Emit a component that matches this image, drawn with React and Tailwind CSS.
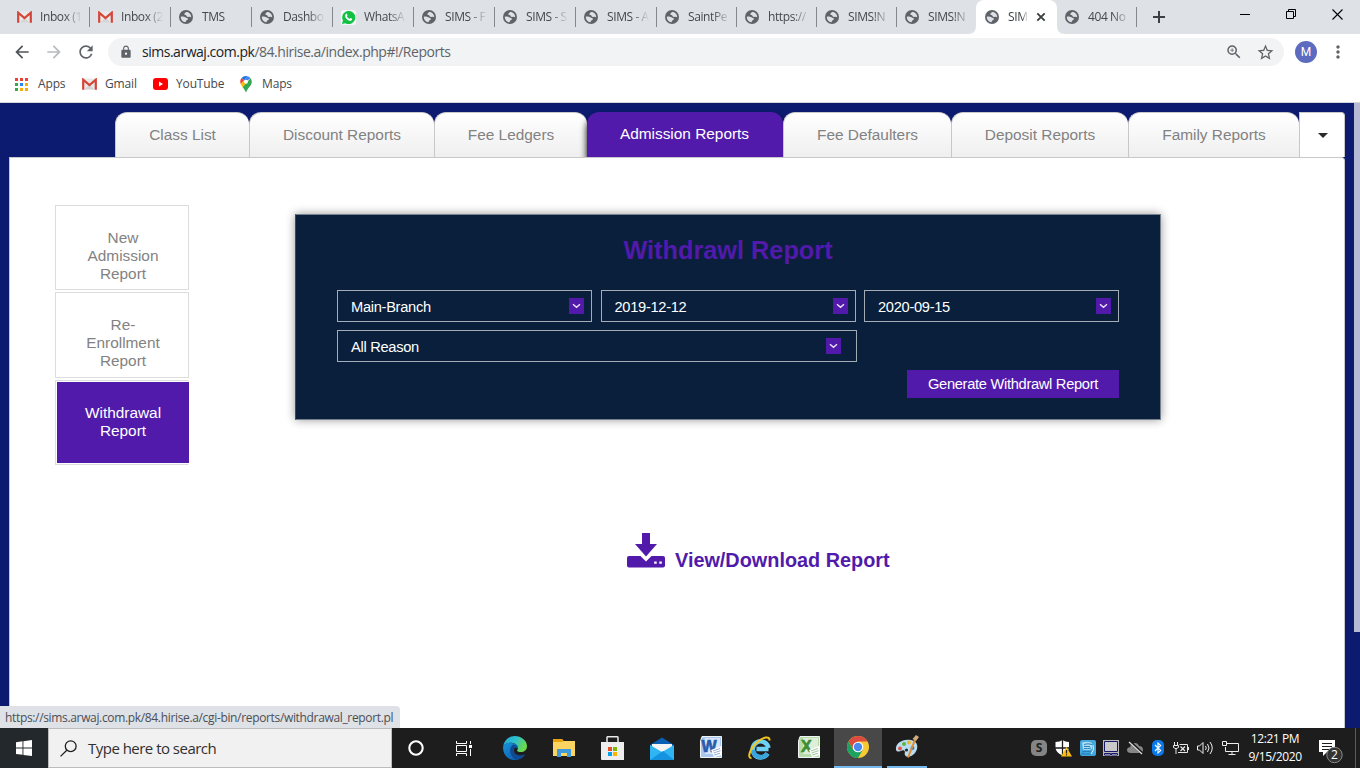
import React from "react";
import { MdLock, MdOutlineZoomIn, MdStarBorder, MdMoreVert, MdArrowBack, MdArrowForward, MdRefresh } from "react-icons/md";

const Globe = () => (
  <svg width="14" height="14" viewBox="0 0 14 14" className="shrink-0">
    <circle cx="7" cy="7" r="7" fill="#5f6368" />
    <path d="M7.200 1.900C6.600 2.800 5.200 3.200 5.300 4.300C5.500 5.400 7.200 4.900 7.600 5.900C7.900 6.800 9.200 7.200 10.200 6.800C11 6.500 11.600 7 12.200 7.400C12.400 4.500 10.300 1.900 7.200 1.900Z" fill="#dee1e6" />
    <path d="M1.800 6.800C2.900 6.300 5 6.200 6.300 7.200C7.200 8 8.900 7.700 8.900 9C8.800 10.100 7.200 10 7 11L6.500 12.300C3.800 12.100 1.700 9.700 1.800 6.800Z" fill="#dee1e6" />
  </svg>
);

const Gmail = () => (
  <svg width="15" height="12" viewBox="0 0 15 12" className="shrink-0">
    <rect x="1" y="0.5" width="13" height="11" rx="1" fill="#e9e9e9" />
    <path d="M2.5 11.5 7.5 6.5 12.5 11.5Z" fill="#d5d5d5" />
    <path d="M1.200 11.700V1.700L7.500 7l6.300-5.300v10" fill="none" stroke="#d54538" strokeWidth="2.200" />
  </svg>
);

const WhatsApp = () => (
  <svg width="15" height="15" viewBox="0 0 16 16" className="shrink-0">
    <rect width="16" height="16" rx="3" fill="#f4f6f5" />
    <path d="M1 15 2.100 11.300A7 7 0 1 1 4.700 14Z" fill="#12c143" />
    <path d="M5.100 4.200c.6-.6 1-.4 1.300.2l.5 1.200c.1.5-.6.9-.5 1.200.6 1.200 1.500 2 2.700 2.500.4.1.8-.9 1.200-.8l1.500.8c.4.3-.1 1.400-.7 1.800-1.600 1-4-.5-5.300-1.900C4.600 8 3.800 5.700 5.100 4.200Z" fill="#fff" />
  </svg>
);

const browserTabs = [
  ["gmail", "Inbox (1"], ["gmail", "Inbox (2"], ["globe", "TMS"], ["globe", "Dashbo"], ["wa", "WhatsA"],
  ["globe", "SIMS - F"], ["globe", "SIMS - S"], ["globe", "SIMS - A"],
];
const browserTabsNarrow = [["globe", "SaintPe"], ["globe", "https://"], ["globe", "SIMS!N"], ["globe", "SIMS!N", true]];

function Favicon({ kind }) {
  if (kind === "gmail") return <Gmail />;
  if (kind === "wa") return <WhatsApp />;
  return <Globe />;
}

function BrowserTab({ kind, label, narrow, last }) {
  return (
    <div className={`${narrow ? "w-20" : "w-[81px]"} flex h-[34px] shrink-0 items-center pl-2`}>
      <span className="flex w-[23px] shrink-0"><Favicon kind={kind} /></span>
      <span className="w-[45px] overflow-hidden whitespace-nowrap text-xs tracking-[-0.4px] text-[#45484c] [mask-image:linear-gradient(to_right,black_55%,transparent_94%)]">{label}</span>
      {!last && <span className="ml-auto h-5 w-px bg-[#84878c]" />}
    </div>
  );
}

function TabStrip() {
  return (
    <div className="flex h-[34px] bg-[#dee1e6] pl-[9px]">
      {browserTabs.map(([k, l], i) => <BrowserTab key={i} kind={k} label={l} />)}
      {browserTabsNarrow.map(([k, l, last], i) => <BrowserTab key={i} kind={k} label={l} narrow last={last} />)}
      <div className="relative -ml-px flex h-[34px] w-[81px] shrink-0 items-center rounded-t-lg bg-white pl-[9px]">
        <svg width="97" height="8" viewBox="0 0 97 8" className="absolute bottom-0 -left-2">
          <path d="M0 8Q8 8 8 0V8ZM97 8Q89 8 89 0V8Z" fill="#fff" />
        </svg>
        <span className="flex w-[23px]"><Globe /></span>
        <span className="w-5 overflow-hidden whitespace-nowrap text-xs tracking-[-0.4px] text-[#3c4043] [mask-image:linear-gradient(to_right,black_70%,transparent)]">SIM</span>
        <svg width="10" height="10" viewBox="0 0 10 10" className="ml-2"><path d="M1.300 1.300 8.700 8.700M8.700 1.300 1.300 8.700" stroke="#3c4043" strokeWidth="1.900" /></svg>
      </div>
      <BrowserTab kind="globe" label="404 No" narrow />
      <svg width="12" height="12" viewBox="0 0 12 12" className="mt-[11px] ml-4"><path d="M6 0V12M0 6H12" stroke="#3c4043" strokeWidth="2" /></svg>
      <div className="mr-[17px] ml-auto flex gap-9 pt-[9px] text-black">
        <svg width="10" height="11" viewBox="0 0 10 11"><path d="M0 5.500H10" stroke="#000" /></svg>
        <svg width="10" height="10" viewBox="0 0 10 10" fill="none" stroke="#000"><path d="M.5 2.500H7.500V9.500H.5ZM2.500 2.500V.5H9.500V7.500H7.500" /></svg>
        <svg width="11" height="11" viewBox="0 0 11 11"><path d="M.5.5 10.500 10.500M10.500.5.5 10.500" stroke="#000" strokeWidth="1.100" /></svg>
      </div>
    </div>
  );
}

function Toolbar() {
  return (
    <div className="flex h-9 items-center bg-white pr-4 pl-3 text-[#5f6368]">
      <MdArrowBack size={20} className="shrink-0 text-[#4f5357]" />
      <MdArrowForward size={20} className="ml-3 shrink-0 text-[#b9bbbe]" />
      <MdRefresh size={20} className="ml-3 shrink-0" />
      <div className="ml-3 flex h-7 w-[1176px] shrink-0 items-center rounded-full bg-[#f1f3f4] pr-[9px] pl-[11px]">
        <MdLock size={14} className="mb-px shrink-0" />
        <span className="ml-[9px] text-sm whitespace-nowrap tracking-[-0.48px] text-[#5f6368]"><span className="text-[#202124]">sims.arwaj.com.pk</span>/84.hirise.a/index.php#!/Reports</span>
        <MdOutlineZoomIn size={18} className="ml-auto" />
        <MdStarBorder size={19} className="ml-[13px]" />
      </div>
      <span className="ml-[11px] flex size-[22px] shrink-0 items-center justify-center rounded-full bg-[#5c6bc0] font-['Roboto',sans-serif] text-xs text-white">M</span>
      <MdMoreVert size={20} className="-mr-1 ml-auto shrink-0" />
    </div>
  );
}

function Bookmarks() {
  return (
    <div className="flex h-8 items-center bg-white pb-1 pl-[15px] text-xs tracking-[-0.15px] text-[#45484c]">
      <svg width="13" height="13" viewBox="0 0 13 13">
        <path d="M0 0h3v3H0zM5 0h3v3H5zM10 0h3v3h-3z" fill="#ea4335" />
        <path d="M0 5h3v3H0z" fill="#34a853" /><path d="M5 5h3v3H5z" fill="#2b86f5" /><path d="M10 5h3v3h-3z" fill="#fbab05" />
        <path d="M0 10h3v3H0z" fill="#34a853" /><path d="M5 10h3v3H5zM10 10h3v3h-3z" fill="#fbab05" />
      </svg>
      <span className="ml-[10px] w-[44px]">Apps</span>
      <Gmail />
      <span className="ml-2 w-[48px]">Gmail</span>
      <svg width="15" height="12" viewBox="0 0 15 12"><rect width="15" height="12" rx="3" fill="#f00" /><path d="M6 3.500 10 6 6 8.500Z" fill="#fff" /></svg>
      <span className="ml-2 w-[64px]">YouTube</span>
      <svg width="12" height="16" viewBox="0 0 12 16">
        <path d="M6 0a5.700 5.700 0 0 0-4.400 2L4.200 4.300 7.800.3Z" fill="#1a73e8" />
        <path d="M7.800.3 4.200 4.300 6 5.500 10.500 2.200A6 6 0 0 0 7.800.3Z" fill="#4285f4" />
        <path d="M1.600 2C.3 3.500-.2 5.700.7 7.900L4.200 4.300Z" fill="#ea4335" />
        <path d="M.7 7.900 4 4.500 6 8 2.600 11.200Z" fill="#fbbc04" />
        <path d="M2.600 11.200 10.500 2.200C12.300 4.400 12.200 7.200 10.600 9.400 8.800 11.600 7.200 13.200 6.500 15.700H5.500C5 14 3.800 12.700 2.600 11.200Z" fill="#34a853" />
        <circle cx="6" cy="5.800" r="2" fill="#fff" />
      </svg>
      <span className="ml-[10px]">Maps</span>
    </div>
  );
}

const reportTabsLeft = [["Class List", "w-[134px]"], ["Discount Reports", "w-[185px]"], ["Fee Ledgers", "w-[153px]"]];
const reportTabsRight = [["Fee Defaulters", "w-[168px]"], ["Deposit Reports", "w-[177px]"], ["Family Reports", "w-[171px]"]];

const ReportTab = ({ label, width }) => (
  <div className={`${width} relative flex h-[45px] shrink-0 items-center justify-center rounded-t-xl border-t border-l border-[#c8c8c8] bg-linear-to-b from-white to-[#efefef] text-[#828282]`}>{label}</div>
);

function ReportTabs() {
  return (
    <div className="ml-[115px] flex h-[54px] w-[1230px] overflow-hidden pt-[9px] font-['Liberation_Sans',Arial,sans-serif] text-[15.4px]">
      {reportTabsLeft.map(([l, w]) => <ReportTab key={l} label={l} width={w} />)}
      <div className="relative flex h-[45px] w-[196px] shrink-0 items-center justify-center rounded-t-xl bg-[#511aab] pr-px pb-px text-white shadow-[0_5px_7px_#000]">Admission Reports</div>
      {reportTabsRight.map(([l, w]) => <ReportTab key={l} label={l} width={w} />)}
      <div className="flex h-[45px] w-[46px] items-center justify-center rounded-tr border border-b-0 border-[#c8c8c8] bg-white">
        <span className="mt-px ml-px border-x-[5.5px] border-t-[5.5px] border-x-transparent border-t-[#2b2b2b]" />
      </div>
    </div>
  );
}

function SideNav() {
  const item = "w-[134px] border border-[#dcdcdc] pt-[23px] pl-0.5 text-center leading-[18px] text-[#828282]";
  return (
    <nav className="mt-[47px] ml-[45px] flex w-[134px] flex-col text-[15.4px]">
      <div className={`${item} h-[85px]`}>New<br />Admission<br />Report</div>
      <div className={`${item} mt-0.5 h-[86px]`}>Re-<br />Enrollment<br />Report</div>
      <div className="mt-0.5 h-[85px] border border-[#dcdcdc] border-r-transparent pt-px pl-px">
        <div className="-mr-px h-[81px] bg-[#511aab] pt-[22px] text-center leading-[18px] text-white">Withdrawal<br />Report</div>
      </div>
    </nav>
  );
}

function Select({ label, wide }) {
  return (
    <div className={`${wide ? "w-[520px] pr-[15px]" : "w-[255px] pr-[7px]"} flex h-8 items-center justify-between border border-[#a3abb5] pl-[13px]`}>
      <span className="pt-px">{label}</span>
      <svg width="15" height="16" viewBox="0 0 15 16"><rect width="15" height="16" fill="#511aab" /><path d="M4 6.200 7.500 9.300 11 6.200" fill="none" stroke="#e8e0f5" strokeWidth="1.500" /></svg>
    </div>
  );
}

function ReportForm() {
  return (
    <section className="h-[206px] w-[866px] border border-[#76818f] border-l-[#39495e] bg-[#0a1f3c] px-[41px] text-[14.67px] tracking-[-0.3px] text-white shadow-[0_0_9px_rgba(0,0,0,.4)]">
      <h1 className="h-[75px] pt-[19px] text-center text-[25.3px] leading-8 font-bold tracking-normal text-[#511aab]">Withdrawl Report</h1>
      <div className="flex w-[782px] justify-between">
        <Select label="Main-Branch" /><Select label="2019-12-12" /><Select label="2020-09-15" />
      </div>
      <div className="mt-2"><Select label="All Reason" wide /></div>
      <div className="mt-2 flex w-[782px] justify-end">
        <button className="h-7 w-[212px] bg-[#511aab] text-center">Generate Withdrawl Report</button>
      </div>
    </section>
  );
}

function Page() {
  return (
    <div className="flex h-[625px] bg-[#0c1b6f]">
      <div className="w-[1354px]">
        <ReportTabs />
        <main className="ml-[9px] flex h-[571px] w-[1336px] rounded-tr border-t border-r border-l border-[#c8c8c8] bg-white font-['Liberation_Sans',Arial,sans-serif]">
          <SideNav />
          <div className="mt-14 ml-[106px]">
            <ReportForm />
            <div className="mt-[113px] ml-[332px] flex text-[#511aab]">
              <svg width="38" height="35" viewBox="0 0 38 35" fill="#511aab">
                <path d="M15 0h8v11h7L19 23.500 8 11h7Z" />
                <path fillRule="evenodd" d="M2 23h11.500L19 28.500 24.500 23H36q2 0 2 2v7.500q0 2-2 2H2q-2 0-2-2V25q0-2 2-2ZM27.200 28.500v2.200h2.500v-2.200ZM32.300 28.500v2.200h2.500v-2.200Z" />
              </svg>
              <span className="ml-[10px] pt-3 text-[19.85px] leading-[30px] font-bold whitespace-nowrap">View/Download Report</span>
            </div>
          </div>
        </main>
      </div>
      <div className="h-[529px] w-1.5 bg-[#b6bad4]" />
      <div className="absolute top-[706px] left-0 h-[22px] w-[400px] rounded-tr bg-[#dee1e6] pl-[5px] text-xs leading-[23px] tracking-[-0.34px] whitespace-nowrap text-[#4b4f54]">https://sims.arwaj.com.pk/84.hirise.a/cgi-bin/reports/withdrawal_report.pl</div>
    </div>
  );
}

const Edge = () => (
  <svg width="24" height="24" viewBox="0 0 24 24">
    <defs>
      <linearGradient id="edgeTop" x1="0" x2="1" y1="0" y2=".4"><stop stopColor="#22a4d8" /><stop offset=".55" stopColor="#2fc2cc" /><stop offset="1" stopColor="#6bd84b" /></linearGradient>
      <linearGradient id="edgeBody" x1="0" x2="1" y1="0" y2="1"><stop stopColor="#1794dd" /><stop offset="1" stopColor="#0c52a5" /></linearGradient>
    </defs>
    <path d="M0 11C1 4 6 0 12 0s12 4.500 12 10c0 4-3 6-6 6-4 0-4.500-1.500-3.500-2.500C16 11 14 8 10 7 5 6 1 8 0 11Z" fill="url(#edgeTop)" />
    <path d="M0 11C1 8 5 6 9 7c4 .5 6.500 3 6 5.500C11 9 6 14 10 19c3 3.500 8 3 12-.5C19.500 22 16 24 12 24 5 24 0 19 0 11Z" fill="url(#edgeBody)" />
    <path d="M10 8.500c-5 4-3 12 2.500 15.300C17 24 21 21 22 18.500c-6 2-11 0-11-4 0-2 1-3 3-3.500C13 9.500 12 8.600 10 8.500Z" fill="#104a91" />
  </svg>
);
const Explorer = () => (
  <svg width="22" height="18" viewBox="0 0 22 18">
    <path d="M0 0h9l1.500 2H22V17H0Z" fill="#fcd462" /><path d="M0 0h9l1.500 2L9 3H0Z" fill="#e8a40c" />
    <path d="M4 10h14v8h-4v-4H8v4H4Z" fill="#3f9bdc" />
  </svg>
);
const Store = () => (
  <svg width="23" height="24" viewBox="0 0 23 24">
    <path d="M6 7V1.500Q6 .7 7 .7H16Q17 .7 17 1.500V7" fill="none" stroke="#e9e9e9" strokeWidth="1.500" />
    <path d="M0 6H23V24H1Q0 24 0 23Z" fill="#eee" /><path d="M7 11h4v4H7z" fill="#e94f23" /><path d="M12 11h4v4h-4z" fill="#7eb900" /><path d="M7 16h4v4H7z" fill="#079fe5" /><path d="M12 16h4v4h-4z" fill="#fcb600" />
  </svg>
);
const Mail = () => (
  <svg width="24" height="23" viewBox="0 0 24 23">
    <path d="M0 8 12 .5 24 8v3H0Z" fill="#0a5fb4" /><path d="M2 7h20v8H2Z" fill="#f4f4f4" />
    <path d="M0 8 12 15 24 8v15H0Z" fill="#2fb5f1" /><path d="M0 23 13 14 24 23Z" fill="#1592e0" />
  </svg>
);
function Office({ letter, border, fill }) {
  return (
    <svg width="22" height="22" viewBox="0 0 22 22">
      <path d="M2 .5H21.500V21.500H.5V5Z" fill={fill} stroke="#f0f5f3" />
      <path d="M5 2H20V18H5Z" fill="#fff" opacity=".55" />
      <text x={letter === "W" ? 1.5 : 3} y="15.500" fontSize={16} fontWeight="700" fontFamily="Liberation Sans, sans-serif" fill={border} stroke={border} strokeWidth=".7">{letter}</text>
      <path d="M11 14l10-4 1 9-8 2Z" fill="#fff" /><path d="M13 15l7-2.500M13.500 17l7-2.300M14 19l6-1.700" stroke={border} strokeWidth=".5" />
    </svg>
  );
}
const InternetExplorer = () => (
  <svg width="24" height="24" viewBox="0 0 24 24" fill="none">
    <path d="M20.500 13H8.500M19.500 17.500A8 8 0 1 1 20.500 12" stroke="#6dd0f5" strokeWidth="4.500" />
    <path d="M19.500 17.500A8 8 0 0 1 5 14" stroke="#3aa5dc" strokeWidth="4.500" />
    <path d="M3.500 22C-1 22.500 1.500 13 9 6.500 15 1 22-.5 21.500 4.500" stroke="#f3c51f" strokeWidth="2" />
  </svg>
);
const Chrome = () => (
  <svg width="22" height="22" viewBox="0 0 22 22">
    <circle cx="11" cy="11" r="11" fill="#f7c933" />
    <path d="M1.470 5.500A11 11 0 0 1 20.530 5.500H11L6.200 13.700Z" fill="#dd4b3e" />
    <path d="M1.470 5.500A11 11 0 0 0 11 22L15.800 13.700 11 16 6.200 13.700Z" fill="#1ca261" />
    <circle cx="11" cy="11" r="5.300" fill="#fff" /><circle cx="11" cy="11" r="4.200" fill="#4b8bf0" />
  </svg>
);
const Paint = () => (
  <svg width="24" height="24" viewBox="0 0 24 24">
    <path d="M1 15C0 8 8 3.500 16 5c7 1 8 8 4 13-3 4-9 5-10 2-1-2 1-3-1-4.500C7 14 3 19 1 15Z" fill="#b9dcee" />
    <circle cx="5" cy="13.500" r="1.900" fill="#e65043" /><circle cx="9" cy="9" r="2" fill="#5cb543" /><circle cx="14" cy="7.500" r="2" fill="#f0b52c" /><circle cx="11.500" cy="15" r="1.600" fill="#1d2b36" /><circle cx="17.500" cy="13" r="1.900" fill="#3179cd" />
    <path d="M20 5 13 22.500" stroke="#df8a32" strokeWidth="2" /><path d="M17.500 4 21 0l3 2-3 4Z" fill="#cfab7e" />
  </svg>
);

function Tray() {
  return (
    <>
      <svg width="16" height="16" viewBox="0 0 16 16"><rect width="16" height="16" rx="5" fill="#858585" /><text x="8" y="12.300" textAnchor="middle" fontSize={12} fontWeight="700" fontFamily="Open Sans, sans-serif" fill="#1e1e1e">S</text></svg>
      <svg width="17" height="17" viewBox="0 0 17 17"><path d="M7.500 0Q10 2 14 2V8Q13 13 7.500 15.500 1 13 .5 8V2Q5 2 7.500 0Z" fill="#fff" /><path d="M7.500 0V15M0 8H14" stroke="#1d1d1d" strokeWidth="1.300" /><path d="M11.500 7 17 16.500H6Z" fill="#fcbe12" /><path d="M11.500 10v3.500M11.500 14.300v1.200" stroke="#222" strokeWidth="1.200" /></svg>
      <svg width="16" height="16" viewBox="0 0 16 16"><rect width="16" height="16" rx="2" fill="#44a7dd" /><path d="M2 2.500Q8 1 12 3V9Q8 11 3 9.500Z" fill="#b0def4" /><path d="M4 4.500Q8 3 12 4.500M4 6.500H10M4 8.500Q8 9 11 8M2 12Q7 10.500 11 12M1 14h10" stroke="#1677b6" strokeWidth=".9" fill="none" /><path d="M13 5q2 5-2 9" stroke="#e5f6fd" fill="none" /></svg>
      <svg width="16" height="16" viewBox="0 0 16 16"><rect width="16" height="16" fill="#b9b9b9" /><path d="M1.500 1.500h13v10h-13z" fill="#c9c9cc" stroke="#16166a" /><path d="M1.500 13.500h6v1.500h-6zM8.500 13.500h6v1.500h-6z" fill="#fff" stroke="#16166a" /></svg>
      <svg width="17" height="14" viewBox="0 0 17 14"><path d="M4 12Q0 12 0 9q0-2.500 3-2.800Q4 2 8 2q3 0 4 3 4 0 4 4 0 3-3 3Z" fill="#878787" /><path d="M2 0 16 13" stroke="#1d1d1d" strokeWidth="3" /><path d="M2 1 15 13" stroke="#e4e4e4" strokeWidth="1.200" /></svg>
      <svg width="12" height="16" viewBox="0 0 12 16"><rect width="12" height="16" rx="5" fill="#0a78e8" /><path d="M3 5 8.700 10.600 6 13V3L8.700 5.400 3 11" fill="none" stroke="#fff" strokeWidth="1.100" /></svg>
      <svg width="16" height="13" viewBox="0 0 16 13" fill="none" stroke="#e8e8e8" className="ml-px"><path d="M1.500 0V3M4.500 0V3M.5 3.500H5.500V5.500Q3 8 .5 5.500ZM3 7V12M6.500 2.500H14.500V10.500H5" /><path d="M15.500 5V8" /><path d="M7.500 4.500 12 9M12 4.500 7.500 9" strokeWidth="1.200" /></svg>
      <svg width="17" height="14" viewBox="0 0 17 14" fill="none" stroke="#eee" className="ml-px"><path d="M.5 5V9H2.500L6 12.500V1.500L2.500 5ZM8.500 5Q10 7 8.500 9M10.500 3Q13.500 7 10.500 11M13 1Q17.500 7 13 13" /></svg>
      <svg width="17" height="14" viewBox="0 0 17 14" fill="none" stroke="#eee"><path d="M5 2.500H16.500V10.500H3.500V6M10 10.500V13.500M6.500 13.500H13.500M.5.5H4.500V4.500H.5Z" /></svg>
    </>
  );
}

function Taskbar() {
  const slot = "flex h-10 w-[49px] shrink-0 items-center justify-center";
  return (
    <div className="flex h-10 bg-[#1d1d1d] text-white">
      <div className="flex w-12 shrink-0 items-center justify-center bg-[#22282b]">
        <svg width="16" height="16" viewBox="0 0 16 16" fill="#fff"><path d="M0 2.200 6.500 1.300V7.600H0ZM7.400 1.200 16 0V7.600H7.400ZM0 8.500H6.500V14.800L0 13.900ZM7.400 8.500H16V16L7.400 14.900Z" /></svg>
      </div>
      <div className="flex w-[344px] shrink-0 items-center border border-[#bcbcbc] bg-[#f1f1f1] pl-[11px]">
        <svg width="17" height="17" viewBox="0 0 17 17" fill="none" stroke="#1e1e1e" strokeWidth="1.300"><circle cx="10.700" cy="6.200" r="5.400" /><path d="M6.800 10.200.5 16.400" /></svg>
        <span className="ml-[11px] text-[15px] tracking-[-0.52px] text-[#303030]">Type here to search</span>
      </div>
      <div className="flex w-[98px] shrink-0 items-center">
        <svg width="16" height="16" viewBox="0 0 16 16" className="ml-4"><circle cx="8" cy="8" r="6.700" fill="none" stroke="#fff" strokeWidth="2.100" /></svg>
        <svg width="16" height="15" viewBox="0 0 16 15" className="ml-8" fill="none" stroke="#fff"><path d="M.5 0V2.500H10.500V0M.5 15V12.500H10.500V15M.5 4.500H10.500V10.500H.5ZM14.500 0V3M14.500 8V15" /><path d="M13 4h3v3h-3z" fill="#fff" stroke="none" /></svg>
      </div>
      <div className={slot}><Edge /></div>
      <div className={slot}><Explorer /></div>
      <div className={slot}><Store /></div>
      <div className={slot}><Mail /></div>
      <div className={`${slot} pb-0.5`}><Office letter="W" border="#285cad" fill="#a9c8ee" /></div>
      <div className={slot}><InternetExplorer /></div>
      <div className={`${slot} pb-0.5`}><Office letter="X" border="#3f8d35" fill="#b5dcaa" /></div>
      <div className="ml-px flex w-12 shrink-0 items-center justify-center border-b-2 border-[#76b9ed] bg-[#484848]"><Chrome /></div>
      <div className="ml-[5px] flex w-10 shrink-0 items-center justify-center border-b-2 border-[#76b9ed]"><Paint /></div>
      <div className="ml-[104px] flex w-[208px] shrink-0 items-center justify-between"><Tray /></div>
      <div className="ml-[7px] flex w-[58px] shrink-0 flex-col items-center pt-[2px] text-xs leading-[18px] tracking-[-0.4px] whitespace-nowrap"><span>12:21 PM</span><span>9/15/2020</span></div>
      <svg width="26" height="26" viewBox="0 0 26 26" className="mt-[11px] ml-[14px]">
        <path d="M1 1H17V13H9L5 17V13H1Z" fill="#fff" /><path d="M4 4.500H14M4 7.500H14M4 10.500H11" stroke="#1d1d1d" />
        <circle cx="16.500" cy="16" r="7.700" fill="#333" stroke="#888" /><text x="16.500" y="20.300" fontSize={12} textAnchor="middle" fill="#fff" fontFamily="Open Sans, sans-serif">2</text>
      </svg>
      <div className="ml-auto w-[5px] border-l border-[#5b5b5b]" />
    </div>
  );
}

export default function App() {
  return (
    <div className="relative h-[768px] w-[1360px] overflow-hidden bg-white font-['Open_Sans','Noto_Sans',sans-serif]">
      <TabStrip />
      <Toolbar />
      <Bookmarks />
      <div className="h-px bg-[#d5d7da]" />
      <Page />
      <Taskbar />
    </div>
  );
}
